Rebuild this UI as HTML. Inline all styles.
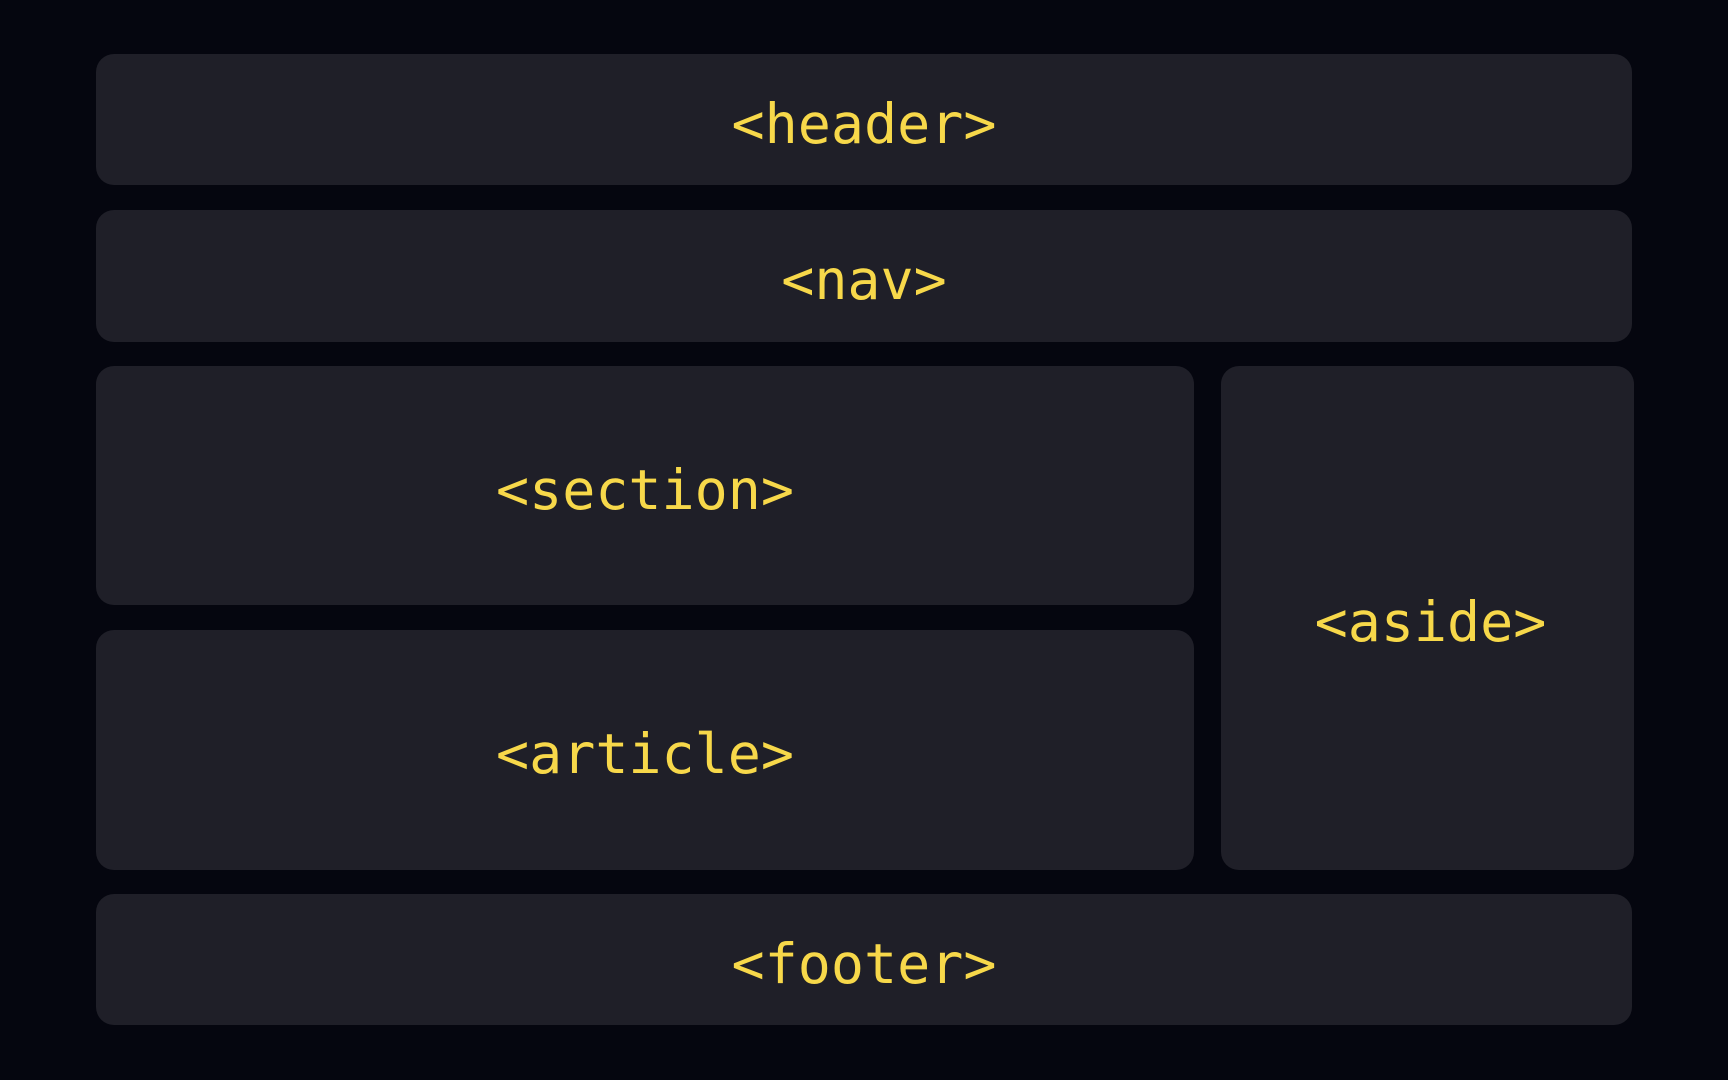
<!DOCTYPE html>
<html><head><style>
html,body{margin:0;padding:0;width:1728px;height:1080px;background:#05060f;overflow:hidden}
.b{position:absolute;box-sizing:border-box;padding-top:8px;background:#1f1f28;border-radius:18px;display:flex;align-items:center;justify-content:center;color:#f7d84a;font-family:"DejaVu Sans Mono","Liberation Mono",monospace;font-size:55px;font-weight:normal}
</style></head><body>
<div class="b" style="left:96px;top:54px;width:1536px;height:131px">&lt;header&gt;</div>
<div class="b" style="left:96px;top:210px;width:1536px;height:132px">&lt;nav&gt;</div>
<div class="b" style="left:96px;top:366px;width:1098px;height:239px">&lt;section&gt;</div>
<div class="b" style="left:96px;top:630px;width:1098px;height:240px">&lt;article&gt;</div>
<div class="b" style="left:1221px;top:366px;width:413px;height:504px;padding-left:6px">&lt;aside&gt;</div>
<div class="b" style="left:96px;top:894px;width:1536px;height:131px">&lt;footer&gt;</div>
</body></html>
